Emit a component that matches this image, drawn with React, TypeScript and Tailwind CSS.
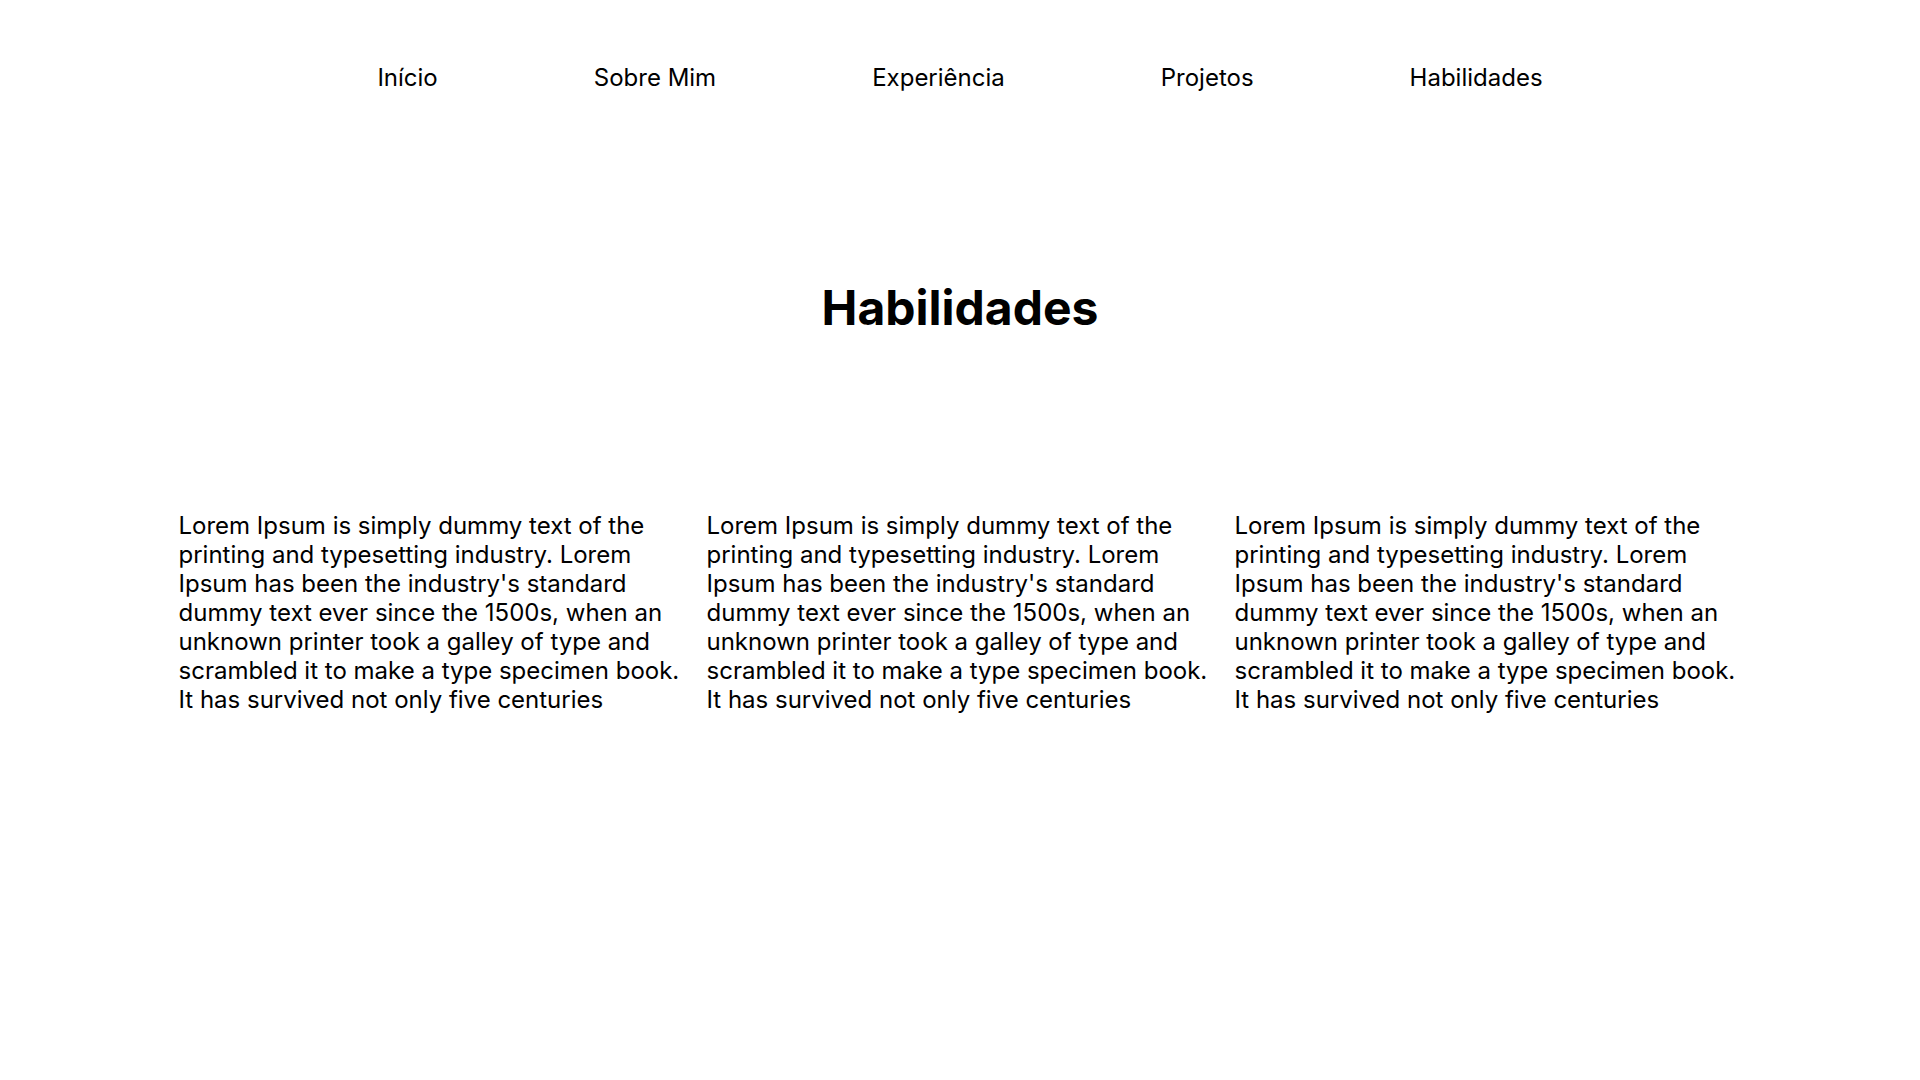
export default function App() {
  const lorem =
    "Lorem Ipsum is simply dummy text of the printing and typesetting industry. Lorem Ipsum has been the industry's standard dummy text ever since the 1500s, when an unknown printer took a galley of type and scrambled it to make a type specimen book. It has survived not only five centuries";
  const nav = ["Início", "Sobre Mim", "Experiência", "Projetos", "Habilidades"];
  return (
    <div className="min-h-screen w-full bg-white text-black" style={{ fontFamily: "Inter, 'Noto Sans', sans-serif" }}>
      <nav className="flex justify-center gap-[156px] pt-[63px]">
        {nav.map((n) => (
          <a key={n} className="text-[24px] leading-[29px] text-black">
            {n}
          </a>
        ))}
      </nav>
      <h1 className="mt-[187px] text-center text-[48px] font-bold leading-[58px]">Habilidades</h1>
      <div className="mx-auto mt-[174px] grid w-[1563px] grid-cols-3 gap-[21px]">
        {[0, 1, 2].map((i) => (
          <p key={i} className="text-[24px] leading-[29px]">
            {lorem}
          </p>
        ))}
      </div>
    </div>
  );
}
